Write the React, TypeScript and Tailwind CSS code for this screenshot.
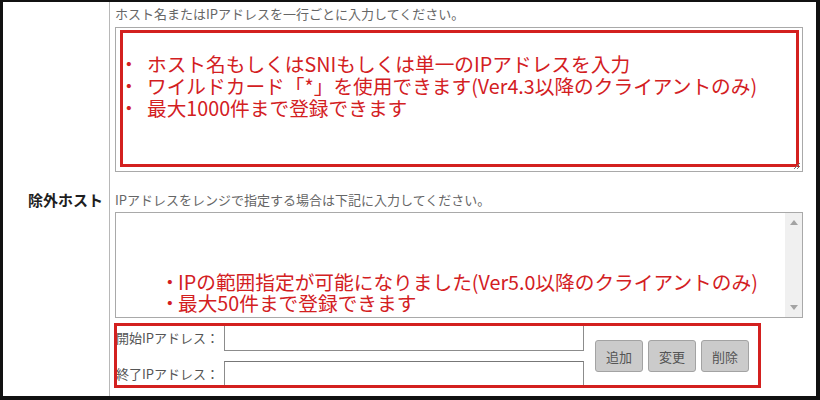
import React from "react";

const jp = { fontFamily: '"Noto Sans CJK JP", "Noto Sans", sans-serif' };

function Btn({ label }: { label: string }) {
  return (
    <button className="w-[48px] h-[32px] rounded-[3px] border border-[#a3a3a3] bg-[#cbcbcb] text-[13px] leading-none text-[#555]">
      {label}
    </button>
  );
}

export default function App() {
  return (
    <div
      className="w-[820px] h-[400px] bg-[#111] pt-[2px] pl-[3px] pr-[4px] pb-[4px]"
      style={jp}
    >
      <div className="flex h-full bg-white">
        <div className="w-[107px] shrink-0 flex items-center justify-end pr-[6px] border-r border-[#b8b8b8]">
          <span className="text-[15px] font-bold text-[#1e1e1e] leading-none">除外ホスト</span>
        </div>
        <div className="flex flex-col pl-[5px]">
          <p className="mt-[2px] h-[20px] leading-[20px] text-[13px] text-[#666] whitespace-nowrap">
            ホスト名またはIPアドレスを一行ごとに入力してください。
          </p>
          <div className="relative mt-[3px] h-[145px] w-[688px] border border-[#a9a9a9] bg-white">
            <div className="pt-[25px] pl-[3px] text-[19.7px] leading-[22px] text-[#d3201f] whitespace-nowrap">
              <div>
                <span className="inline-block w-[28px]">・</span>ホスト名もしくはSNIもしくは単一のIPアドレスを入力
              </div>
              <div>
                <span className="inline-block w-[28px]">・</span>ワイルドカード「*」を使用できます(Ver4.3以降のクライアントのみ)
              </div>
              <div>
                <span className="inline-block w-[28px]">・</span>最大1000件まで登録できます
              </div>
            </div>
            <div className="absolute left-[4px] top-[2px] right-[3px] bottom-[4px] border-[3px] border-[#d3201f]" />
            <svg className="absolute right-[1px] bottom-[1px]" width="9" height="9" viewBox="0 0 9 9">
              <path d="M2 8 L8 2 M5 8 L8 5" stroke="#777" strokeWidth="1" />
            </svg>
          </div>
          <p className="mt-[18px] h-[20px] leading-[20px] text-[13px] text-[#666] whitespace-nowrap">
            IPアドレスをレンジで指定する場合は下記に入力してください。
          </p>
          <div className="mt-[2px] h-[106px] w-[688px] border border-[#a9a9a9] bg-white flex">
            <div className="flex-1 pt-[58px] pl-[44px] text-[19.7px] leading-[21px] text-[#d3201f] whitespace-nowrap">
              <div>
                <span className="inline-block w-[18px]">・</span>IPの範囲指定が可能になりました(Ver5.0以降のクライアントのみ)
              </div>
              <div>
                <span className="inline-block w-[18px]">・</span>最大50件まで登録できます
              </div>
            </div>
            <div className="w-[17px] bg-[#f0f0f0] flex flex-col items-center justify-between py-[7px]">
              <svg width="8" height="5" viewBox="0 0 8 5">
                <path d="M0 5 L4 0 L8 5 Z" fill="#a3a3a3" />
              </svg>
              <svg width="8" height="5" viewBox="0 0 8 5">
                <path d="M0 0 L8 0 L4 5 Z" fill="#a3a3a3" />
              </svg>
            </div>
          </div>
          <div className="relative mt-[7px] w-[646px] flex items-center">
            <div className="flex flex-col gap-[10px] pl-[1px]">
              <div className="flex items-center">
                <span className="w-[108px] text-[13px] text-[#555] whitespace-nowrap">開始IPアドレス：</span>
                <div className="w-[360px] h-[26px] border border-[#8c8c8c] border-t-[#777] bg-white" />
              </div>
              <div className="flex items-center">
                <span className="w-[108px] text-[13px] text-[#555] whitespace-nowrap">終了IPアドレス：</span>
                <div className="w-[360px] h-[26px] border border-[#8c8c8c] border-t-[#777] bg-white" />
              </div>
            </div>
            <div className="ml-[11px] flex gap-[5px]">
              <Btn label="追加" />
              <Btn label="変更" />
              <Btn label="削除" />
            </div>
            <div className="absolute -top-[2px] -left-[1px] right-0 -bottom-[1px] border-[3px] border-[#d3201f]" />
          </div>
        </div>
      </div>
    </div>
  );
}
